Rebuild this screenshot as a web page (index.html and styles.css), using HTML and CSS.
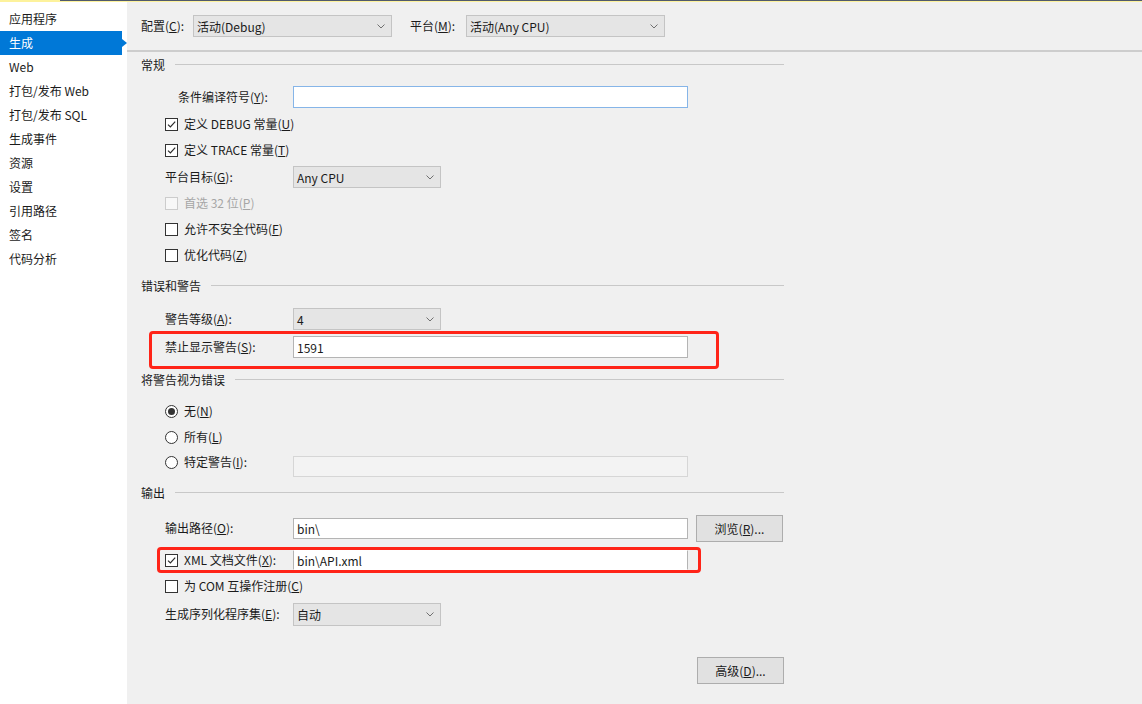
FILE: index.html
```html
<!DOCTYPE html>
<html lang="zh-CN">
<head>
    <meta charset="UTF-8">
    <title>生成</title>
    <link rel="stylesheet" href="styles.css">
</head>
<body>
    <div class="strip"><div class="strip-left"></div><div class="strip-right"></div></div>
    <div class="window">
        <div class="sidebar">
            <div class="nav-item">应用程序</div>
            <div class="nav-item active">生成</div>
            <div class="nav-item">Web</div>
            <div class="nav-item">打包/发布 Web</div>
            <div class="nav-item">打包/发布 SQL</div>
            <div class="nav-item">生成事件</div>
            <div class="nav-item">资源</div>
            <div class="nav-item">设置</div>
            <div class="nav-item">引用路径</div>
            <div class="nav-item">签名</div>
            <div class="nav-item">代码分析</div>
        </div>
        <div class="main">
            <div class="topbar">
                <span class="top-label">配置(<u>C</u>):</span>
                <div class="select top-select"><span>活动(Debug)</span><svg class="chev" width="8" height="5" viewBox="0 0 8 5"><path d="M0.5 0.5 L4 4 L7.5 0.5"/></svg></div>
                <span class="top-label plat">平台(<u>M</u>):</span>
                <div class="select top-select"><span>活动(Any CPU)</span><svg class="chev" width="8" height="5" viewBox="0 0 8 5"><path d="M0.5 0.5 L4 4 L7.5 0.5"/></svg></div>
            </div>

            <div class="content">
                <div class="heading"><span>常规</span><div class="rule"></div></div>
                <div class="row h22 r-cond">
                    <span class="label cond-label">条件编译符号(<u>Y</u>):</span>
                    <div class="input focus"></div>
                </div>
                <div class="row r-debug">
                    <span class="check"><svg width="11" height="11" viewBox="0 0 11 11"><path d="M2 5.6 L4.4 8 L9.2 2.6"/></svg></span>
                    <span>定义 DEBUG 常量(<u>U</u>)</span>
                </div>
                <div class="row">
                    <span class="check"><svg width="11" height="11" viewBox="0 0 11 11"><path d="M2 5.6 L4.4 8 L9.2 2.6"/></svg></span>
                    <span>定义 TRACE 常量(<u>T</u>)</span>
                </div>
                <div class="row h22 r-target">
                    <span class="label">平台目标(<u>G</u>):</span>
                    <div class="select small-select"><span>Any CPU</span><svg class="chev" width="8" height="5" viewBox="0 0 8 5"><path d="M0.5 0.5 L4 4 L7.5 0.5"/></svg></div>
                </div>
                <div class="row disabled r-pref">
                    <span class="check"></span>
                    <span>首选 32 位(<u>P</u>)</span>
                </div>
                <div class="row">
                    <span class="check"></span>
                    <span>允许不安全代码(<u>F</u>)</span>
                </div>
                <div class="row">
                    <span class="check"></span>
                    <span>优化代码(<u>Z</u>)</span>
                </div>

                <div class="heading h-errors"><span>错误和警告</span><div class="rule"></div></div>
                <div class="row h22 r-level">
                    <span class="label">警告等级(<u>A</u>):</span>
                    <div class="select small-select"><span>4</span><svg class="chev" width="8" height="5" viewBox="0 0 8 5"><path d="M0.5 0.5 L4 4 L7.5 0.5"/></svg></div>
                </div>
                <div class="mark mark-suppress">
                    <div class="row h22 in-mark">
                        <span class="label">禁止显示警告(<u>S</u>):</span>
                        <div class="input"><span>1591</span></div>
                    </div>
                </div>

                <div class="heading h-treat"><span>将警告视为错误</span><div class="rule"></div></div>
                <div class="row r-none">
                    <span class="radio on"></span>
                    <span>无(<u>N</u>)</span>
                </div>
                <div class="row">
                    <span class="radio"></span>
                    <span>所有(<u>L</u>)</span>
                </div>
                <div class="row r-specific">
                    <span class="label radio-label"><span class="radio"></span><span>特定警告(<u>I</u>):</span></span>
                    <div class="input off"></div>
                </div>

                <div class="heading h-output"><span>输出</span><div class="rule"></div></div>
                <div class="row r-path">
                    <span class="label">输出路径(<u>O</u>):</span>
                    <div class="input"><span>bin\</span></div>
                    <div class="button">浏览(<u>R</u>)...</div>
                </div>
                <div class="mark mark-xml">
                    <div class="row in-mark h20">
                        <span class="label radio-label">
                            <span class="check"><svg width="11" height="11" viewBox="0 0 11 11"><path d="M2 5.6 L4.4 8 L9.2 2.6"/></svg></span>
                            <span>XML 文档文件(<u>X</u>):</span>
                        </span>
                        <div class="input xml-input"><span>bin\API.xml</span></div>
                    </div>
                </div>
                <div class="row">
                    <span class="check"></span>
                    <span>为 COM 互操作注册(<u>C</u>)</span>
                </div>
                <div class="row h23 r-gen">
                    <span class="label">生成序列化程序集(<u>E</u>):</span>
                    <div class="select small-select"><span>自动</span><svg class="chev" width="8" height="5" viewBox="0 0 8 5"><path d="M0.5 0.5 L4 4 L7.5 0.5"/></svg></div>
                </div>
                <div class="row r-advanced">
                    <div class="button">高级(<u>D</u>)...</div>
                </div>
            </div>
        </div>
    </div>
</body>
</html>
```

FILE: styles.css
```css
body {
    margin: 0;
    padding: 0;
    height: 704px;
    overflow: hidden;
    display: flex;
    flex-direction: column;
    font-family: "Noto Sans CJK SC", "Noto Sans", sans-serif;
    font-size: 12px;
    color: #1b1b1b;
    background-color: #f0f0f0;
}
u {
    text-decoration: underline;
    text-underline-offset: 1px;
}
.strip {
    height: 2px;
    display: flex;
}
.strip-left {
    width: 60px;
    background-color: #fdf29c;
}
.strip-right {
    flex: 1;
    height: 1px;
    background-color: #505a6b;
    border-bottom: 1px solid #fdf29c;
}
.window {
    flex: 1;
    display: flex;
}
.sidebar {
    width: 127px;
    background-color: #ffffff;
    padding-top: 5px;
}
.nav-item {
    position: relative;
    width: 122px;
    height: 24px;
    line-height: 24px;
    padding-left: 9px;
    box-sizing: border-box;
    white-space: nowrap;
}
.nav-item.active {
    background-color: #0078d7;
    color: white;
}
.nav-item.active::after {
    content: '';
    position: absolute;
    right: -5px;
    top: 8px;
    border-left: 5px solid #0078d7;
    border-top: 4.5px solid transparent;
    border-bottom: 4.5px solid transparent;
}
.main {
    flex: 1;
}
.topbar {
    height: 48px;
    display: flex;
    align-items: center;
    padding-left: 14px;
    border-bottom: 2px solid #cdcdcd;
}
.top-label {
    width: 52px;
    margin-bottom: 2px;
}
.top-label.plat {
    width: 56px;
    margin-left: 18px;
}
.select {
    height: 22px;
    box-sizing: border-box;
    background-color: #e5e5e5;
    border: 1px solid #c4c4c4;
    display: flex;
    align-items: center;
    justify-content: space-between;
    padding: 0 6px 0 3px;
}
.top-select {
    width: 199px;
}
.small-select {
    width: 148px;
}
.h23 .select {
    height: 23px;
}
.chev path {
    fill: none;
    stroke: #707070;
}
.content {
    width: 643px;
    padding-left: 14px;
}
.heading {
    height: 26px;
    display: flex;
    align-items: center;
}
.heading > span {
    margin-bottom: 2px;
}
.heading .rule {
    flex: 1;
    height: 1px;
    background-color: #c8c8c8;
    margin-left: 10px;
    margin-top: -2px;
}
.h-errors { margin-top: 5px; }
.h-treat { margin-top: -2px; }
.h-output { margin-top: 5px; }
.row {
    height: 26px;
    display: flex;
    align-items: center;
    padding-left: 24px;
    white-space: nowrap;
}
.row > span:not(.check):not(.radio):not(.radio-label),
.radio-label > span:not(.check):not(.radio) {
    margin-bottom: 2px;
}
.row.h22 { height: 22px; }
.row.h20 { height: 20px; }
.row.h23 { height: 23px; }
.r-cond { margin-top: 8px; }
.r-debug { margin-top: 3px; }
.r-target { margin-top: 3px; }
.r-pref { margin-top: 2px; }
.r-level { margin-top: 9px; }
.r-none { margin-top: 5px; }
.r-specific { margin-top: -1px; }
.r-path { height: 27px; margin-top: 9px; }
.r-gen { margin-top: 4px; }
.r-advanced {
    height: 27px;
    margin-top: 31px;
    justify-content: flex-end;
}
.label {
    width: 128px;
    flex-shrink: 0;
}
.cond-label {
    width: 115px;
    margin-left: 13px;
}
.radio-label {
    display: flex;
    align-items: center;
}
.input {
    width: 395px;
    height: 22px;
    box-sizing: border-box;
    background-color: #ffffff;
    border: 1px solid #b4b4b4;
    display: flex;
    align-items: center;
    padding-left: 3px;
}
.input.focus {
    border-color: #86b5e8;
}
.input.off {
    height: 21px;
    background-color: #f3f3f3;
    border-color: #d6d6d6;
    align-self: flex-start;
    margin-top: 7px;
}
.r-path .input {
    height: 21px;
}
.xml-input {
    height: 20px;
    border-top-color: #ffffff;
    border-bottom-color: #ffffff;
}
.check {
    width: 13px;
    height: 13px;
    box-sizing: border-box;
    border: 1px solid #333333;
    background-color: #ffffff;
    margin-right: 6px;
    display: flex;
    align-items: center;
    justify-content: center;
    flex-shrink: 0;
}
.check path {
    fill: none;
    stroke: #2b2b2b;
    stroke-width: 1.2;
}
.disabled {
    color: #a6a6a6;
}
.disabled .check {
    border-color: #cccccc;
    background-color: #f7f7f7;
}
.radio {
    width: 13px;
    height: 13px;
    box-sizing: border-box;
    border: 1px solid #333333;
    border-radius: 50%;
    background-color: #ffffff;
    margin-right: 6px;
    display: flex;
    align-items: center;
    justify-content: center;
    flex-shrink: 0;
}
.radio.on::after {
    content: '';
    width: 7px;
    height: 7px;
    border-radius: 50%;
    background-color: #333333;
}
.button {
    width: 87px;
    height: 27px;
    box-sizing: border-box;
    background-color: #e1e1e1;
    border: 1px solid #adadad;
    display: flex;
    align-items: center;
    justify-content: center;
    margin-left: 8px;
}
.mark {
    border: 3px solid #ff2418;
    border-radius: 4px;
    box-sizing: border-box;
}
.mark .in-mark {
    padding-left: 0;
}
.mark-suppress {
    width: 570px;
    margin-left: 8px;
    margin-top: 1px;
    padding: 2px 0 8px 13px;
}
.mark-xml {
    width: 544px;
    margin-left: 16px;
    margin-top: 5px;
    padding-left: 5px;
}
```
